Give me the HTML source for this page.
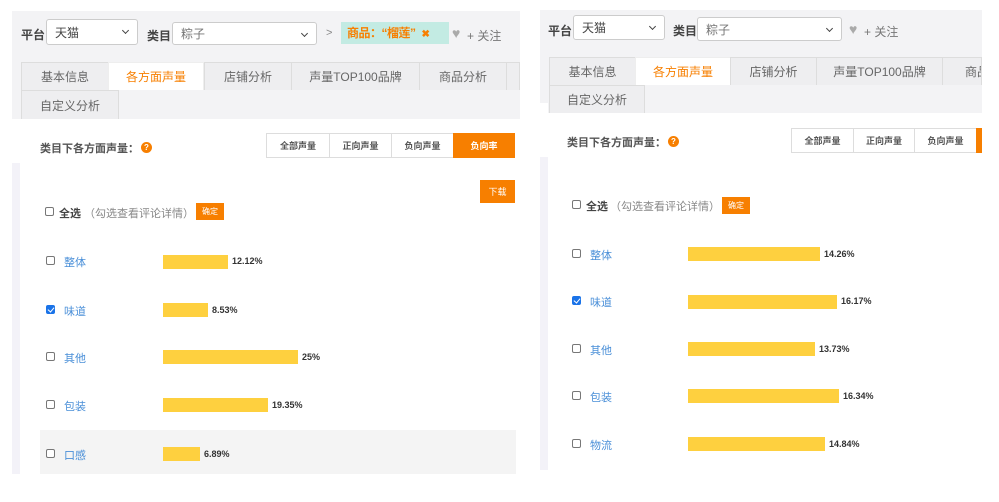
<!DOCTYPE html><html><head><meta charset="utf-8"><style>
*{margin:0;padding:0;box-sizing:border-box}
body{width:999px;height:502px;background:#fff;position:relative;overflow:hidden;font-family:"Liberation Sans","Noto Sans CJK SC",sans-serif;font-size:12px;color:#333}
.a{position:absolute;white-space:nowrap}
.sel{position:absolute;background:#fff;border:1px solid #ccc;border-radius:3px;padding-left:8px;font-size:12px;color:#444;display:flex;align-items:center}
.sel:after{content:"";position:absolute;right:9px;top:8px;width:4px;height:4px;border-right:1.5px solid #444;border-bottom:1.5px solid #444;transform:rotate(45deg)}
.tab{position:absolute;height:28px;border:1px solid #ddd;border-bottom:none;background:#eeeef0;color:#666;font-size:12px;display:flex;align-items:center;justify-content:center;white-space:nowrap;overflow:hidden}
.tab.on{background:#fff;color:#f77f00;border-color:#eee}
.btn{position:absolute;height:25px;border:1px solid #ddd;background:#fff;font-size:9px;color:#555;display:flex;align-items:center;justify-content:center;font-weight:bold}
.btn.on{background:#f77f00;color:#fff;border-color:#f77f00}
.cb{position:absolute;width:9px;height:9px;border:1px solid #777;border-radius:2px;background:#fff}
.cb.on{background:#1a73e8;border-color:#1a73e8}
.cb.on:after{content:"";position:absolute;left:2px;top:0px;width:3px;height:5px;border-right:1.5px solid #fff;border-bottom:1.5px solid #fff;transform:rotate(40deg)}
.lb{position:absolute;color:#4a8fd8;font-size:11px}
.bar{position:absolute;height:14px;background:#fed03f}
.pc{position:absolute;font-size:9px;font-weight:bold;color:#333}
.q{position:absolute;width:11px;height:11px;border-radius:50%;background:#f77f00;color:#fff;font-size:8px;font-weight:bold;text-align:center;line-height:11px}
.or{position:absolute;background:#f77f00;color:#fff;font-size:9px;display:flex;align-items:center;justify-content:center}
.b{font-weight:bold;color:#444}
.hint{position:absolute;color:#888;font-size:11px;white-space:nowrap}
</style></head><body>
<!-- LEFT -->
<div class="a" style="left:12px;top:11px;width:508px;height:108px;background:#f3f3f5"></div>
<div class="a" style="left:12px;top:163px;width:8px;height:311px;background:#f3f2f8"></div>
<div class="a b" style="left:21px;top:26px;font-size:12px">平台</div>
<div class="sel" style="left:46px;top:19px;width:92px;height:26px">天猫</div>
<div class="a b" style="left:147px;top:27px">类目</div>
<div class="sel" style="left:172px;top:22px;width:145px;height:23px;color:#777">粽子</div>
<div class="a" style="left:326px;top:27px;color:#888;font-size:11px">&gt;</div>
<div class="a" style="left:341px;top:22px;width:108px;height:22px;background:#c3ebe3;color:#f77f00;font-weight:bold;padding-left:6px;line-height:22px;font-size:12px;letter-spacing:-0.5px">商品：“榴莲”<span style="margin-left:6px;font-size:10px">✖</span></div>
<div class="a" style="left:452px;top:25px;color:#aaa;font-size:14px">♥</div>
<div class="a" style="left:467px;top:27px;color:#777">+ 关注</div>
<div class="tab" style="left:21px;top:62px;width:88px">基本信息</div>
<div class="tab on" style="left:108px;top:62px;width:96px">各方面声量</div>
<div class="tab" style="left:204px;top:62px;width:88px">店铺分析</div>
<div class="tab" style="left:291px;top:62px;width:129px">声量TOP100品牌</div>
<div class="tab" style="left:419px;top:62px;width:88px">商品分析</div>
<div class="tab" style="left:506px;top:62px;width:14px"></div>
<div class="tab" style="left:21px;top:90px;width:98px;height:29px">自定义分析</div>
<div class="a b" style="left:40px;top:140px;color:#555;font-size:11px">类目下各方面声量：</div>
<div class="q" style="left:141px;top:142px">?</div>
<div class="btn" style="left:266px;top:133px;width:64px">全部声量</div>
<div class="btn" style="left:329px;top:133px;width:63px">正向声量</div>
<div class="btn" style="left:391px;top:133px;width:63px">负向声量</div>
<div class="btn on" style="left:453px;top:133px;width:62px">负向率</div>
<div class="or" style="left:480px;top:180px;width:35px;height:23px">下载</div>
<div class="cb" style="left:45px;top:207px"></div>
<div class="a b" style="left:59px;top:205px;font-size:11px">全选</div>
<div class="hint" style="left:84px;top:205px">（勾选查看评论详情）</div>
<div class="or" style="left:196px;top:203px;width:28px;height:17px;font-size:8px">确定</div>
<div class="a" style="left:40px;top:430px;width:476px;height:44px;background:#f4f4f4"></div>
<div class="cb" style="left:46px;top:256px"></div><div class="lb" style="left:64px;top:254px">整体</div><div class="bar" style="left:163px;top:255px;width:65px"></div><div class="pc" style="left:232px;top:256px">12.12%</div>
<div class="cb on" style="left:46px;top:305px"></div><div class="lb" style="left:64px;top:303px">味道</div><div class="bar" style="left:163px;top:303px;width:45px"></div><div class="pc" style="left:212px;top:305px">8.53%</div>
<div class="cb" style="left:46px;top:352px"></div><div class="lb" style="left:64px;top:350px">其他</div><div class="bar" style="left:163px;top:350px;width:135px"></div><div class="pc" style="left:302px;top:352px">25%</div>
<div class="cb" style="left:46px;top:400px"></div><div class="lb" style="left:64px;top:398px">包装</div><div class="bar" style="left:163px;top:398px;width:105px"></div><div class="pc" style="left:272px;top:400px">19.35%</div>
<div class="cb" style="left:46px;top:449px"></div><div class="lb" style="left:64px;top:447px">口感</div><div class="bar" style="left:163px;top:447px;width:37px"></div><div class="pc" style="left:204px;top:449px">6.89%</div>
<!-- RIGHT -->
<div class="a" style="left:540px;top:10px;width:442px;height:103px;background:#f3f3f5"></div>
<div class="a" style="left:540px;top:103px;width:8px;height:10px;background:#fff"></div>
<div class="a" style="left:540px;top:157px;width:8px;height:313px;background:#f3f2f8"></div>
<div class="a b" style="left:548px;top:22px">平台</div>
<div class="sel" style="left:573px;top:15px;width:92px;height:25px">天猫</div>
<div class="a b" style="left:673px;top:22px">类目</div>
<div class="sel" style="left:697px;top:17px;width:145px;height:24px;color:#777">粽子</div>
<div class="a" style="left:849px;top:21px;color:#aaa;font-size:14px">♥</div>
<div class="a" style="left:864px;top:23px;color:#777">+ 关注</div>
<div class="tab" style="left:549px;top:57px;width:87px">基本信息</div>
<div class="tab on" style="left:635px;top:57px;width:96px">各方面声量</div>
<div class="tab" style="left:730px;top:57px;width:87px">店铺分析</div>
<div class="tab" style="left:816px;top:57px;width:127px">声量TOP100品牌</div>
<div class="tab" style="left:942px;top:57px;width:40px;justify-content:flex-start;padding-left:22px">商品</div>
<div class="tab" style="left:549px;top:85px;width:96px">自定义分析</div>
<div class="a b" style="left:567px;top:134px;color:#555;font-size:11px">类目下各方面声量：</div>
<div class="q" style="left:668px;top:136px">?</div>
<div class="btn" style="left:791px;top:128px;width:63px">全部声量</div>
<div class="btn" style="left:853px;top:128px;width:62px">正向声量</div>
<div class="btn" style="left:914px;top:128px;width:63px">负向声量</div>
<div class="btn on" style="left:976px;top:128px;width:6px"></div>
<div class="cb" style="left:572px;top:200px"></div>
<div class="a b" style="left:586px;top:198px;font-size:11px">全选</div>
<div class="hint" style="left:610px;top:198px">（勾选查看评论详情）</div>
<div class="or" style="left:722px;top:197px;width:28px;height:17px;font-size:8px">确定</div>
<div class="cb" style="left:572px;top:249px"></div><div class="lb" style="left:590px;top:247px">整体</div><div class="bar" style="left:688px;top:247px;width:132px"></div><div class="pc" style="left:824px;top:249px">14.26%</div>
<div class="cb on" style="left:572px;top:296px"></div><div class="lb" style="left:590px;top:294px">味道</div><div class="bar" style="left:688px;top:295px;width:149px"></div><div class="pc" style="left:841px;top:296px">16.17%</div>
<div class="cb" style="left:572px;top:344px"></div><div class="lb" style="left:590px;top:342px">其他</div><div class="bar" style="left:688px;top:342px;width:127px"></div><div class="pc" style="left:819px;top:344px">13.73%</div>
<div class="cb" style="left:572px;top:391px"></div><div class="lb" style="left:590px;top:389px">包装</div><div class="bar" style="left:688px;top:389px;width:151px"></div><div class="pc" style="left:843px;top:391px">16.34%</div>
<div class="cb" style="left:572px;top:439px"></div><div class="lb" style="left:590px;top:437px">物流</div><div class="bar" style="left:688px;top:437px;width:137px"></div><div class="pc" style="left:829px;top:439px">14.84%</div>
</body></html>
